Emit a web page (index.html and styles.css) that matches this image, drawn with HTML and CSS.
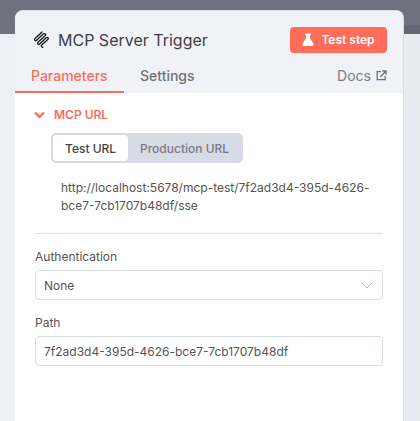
FILE: index.html
```html
<!DOCTYPE html>
<html lang="en">
<head>
<meta charset="utf-8">
<title>MCP Server Trigger</title>
<link rel="stylesheet" href="styles.css">
</head>
<body>
<div class="backdrop">
  <div class="strip-left"><div class="strip-dark"></div></div>
  <main class="card">
    <header class="head">
      <div class="title-row">
        <svg class="logo" width="16" height="17" viewBox="0 0 16 17" fill="none" stroke="#17171c" stroke-width="1.300" stroke-linecap="round" stroke-linejoin="round">
          <path d="M9 1 L2 7.500 C.8 8.700 2 10.300 3.300 9.500 L10.200 3 C11.800 1.900 13.300 3.400 12.100 4.700 L5 11.300 C3.900 12.500 5.300 14 6.600 13 L13.200 6.700 C14.700 5.700 15.900 7.300 14.800 8.500 L8.700 14 C7.900 14.900 8.600 16 9.800 16.300"/>
        </svg>
        <h1 class="title">MCP Server Trigger</h1>
        <button class="test-btn">
          <svg width="12" height="13" viewBox="0 0 12 13" fill="#fff"><path d="M3 0.500h6v1.400H8v3.200l3.400 5.600c.6 1-.1 2.300-1.300 2.300H1.900C.7 13 0 11.700.6 10.700L4 5.100V1.900H3z"/></svg>
          <span>Test step</span>
        </button>
      </div>
      <nav class="tabs">
        <span class="tab active">Parameters</span>
        <span class="tab">Settings</span>
        <span class="docs">Docs
          <svg width="11" height="11" viewBox="0 0 11 11" fill="none" stroke="#71717a" stroke-width="1.300"><path d="M5 1.700H1.200v8h8V6M4.300 6.700L9.800 1.200M6.300 1H10v3.700"/></svg>
        </span>
      </nav>
    </header>
    <section class="body">
      <div class="section-head">
        <svg width="11" height="8" viewBox="0 0 11 8" fill="none" stroke="#ff6d5a" stroke-width="2.400"><path d="M1 1.500l4.500 4.300 4.500-4.300"/></svg>
        <span>MCP URL</span>
      </div>
      <div class="switch">
        <span class="opt on">Test URL</span>
        <span class="opt">Production URL</span>
      </div>
      <p class="url">http://localhost:5678/mcp-test/7f2ad3d4-395d-4626-bce7-7cb1707b48df/sse</p>
      <hr class="rule">
      <label class="field-label">Authentication</label>
      <div class="field select">
        <span>None</span>
        <svg width="12" height="7" viewBox="0 0 12 7" fill="none" stroke="#b6b9c4" stroke-width="1"><path d="M.8.800L6 6l5.200-5.200"/></svg>
      </div>
      <label class="field-label path-label">Path</label>
      <div class="field">7f2ad3d4-395d-4626-bce7-7cb1707b48df</div>
    </section>
  </main>
  <div class="strip-right"><div class="strip-dark"></div><div class="strip-band"></div></div>
</div>
</body>
</html>
```
FILE: styles.css
```css
* { box-sizing: border-box; }
html, body { margin: 0; height: 100%; overflow: hidden; }
body { font-family: Inter, "Liberation Sans", sans-serif; color: #555; background: #eceef5; }
.backdrop { display: flex; height: 421px; background: #71707f; }
.strip-left { width: 15px; background: #eef0f7; }
.strip-left .strip-dark { height: 34px; background: #71707f; }
.strip-right { flex: 1; background: #e9ebf3; }
.strip-right .strip-dark { height: 25px; background: #71707f; }
.strip-right .strip-band { height: 9px; background: #666673; }
.card { width: 389px; margin-top: 10px; height: 411px; background: #fff; border: 1px solid #dbdfe8; border-bottom: 0; border-left: 0; border-radius: 8px 8px 0 0; overflow: hidden; }
.head { height: 82px; background: #f0f2f8; }
.title-row { display: flex; align-items: center; height: 55px; padding: 2px 16px 0 18px; }
.logo { flex: none; margin-right: 9px; }
.title { margin: 0; font-size: 16px; font-weight: 400; color: #3f3f46; flex: 1; }
.test-btn { display: flex; align-items: center; justify-content: center; gap: 7px; width: 97px; height: 26px; border: 0; border-radius: 4px; background: #ff6d5a; color: #fff; font: 600 12px Inter, sans-serif; padding: 0; }
.tabs { display: flex; height: 27px; align-items: flex-start; }
.tab { padding: 0 16px; height: 27px; line-height: 19px; font-size: 14px; font-weight: 500; color: #71717a; }
.tab.active { color: #ff6d5a; border-bottom: 2px solid #ff6d5a; width: 109px; text-align: left; }
.docs { margin-left: auto; padding-right: 16px; display: flex; align-items: center; gap: 5px; height: 19px; font-size: 14px; font-weight: 400; color: #7b7b85; }
.body { padding: 0 20px; }
.section-head { display: flex; align-items: center; gap: 9px; padding: 14px 0 0 0; margin-left: -1px; height: 29px; font-size: 12px; font-weight: 600; color: #ff6d5a; }
.switch { display: inline-flex; margin: 11px 0 0 16px; height: 30px; padding: 2px; background: #d7dbe6; border-radius: 5px; }
.opt { display: flex; align-items: center; padding: 0 12px; font-size: 12px; font-weight: 500; color: #777884; }
.opt.on { width: 75px; padding: 0 0 0 12px; background: #fff; color: #444; border-radius: 4px; }
.url { margin: 16px 0 0 26px; font-size: 12px; line-height: 18px; color: #555; }
.rule { margin: 18px 0 0; border: 0; height: 1px; background: #dbdfe8; }
.field-label { display: block; margin-top: 14px; font-size: 12px; line-height: 18px; color: #555; }
.path-label { margin-top: 14px; }
.field { display: flex; align-items: center; justify-content: space-between; height: 30px; margin-top: 4px; padding: 0 8px; border: 1px solid #d9dde8; border-radius: 4px; background: #fff; font-size: 12px; color: #555; }
.select { padding-right: 9px; }
```
